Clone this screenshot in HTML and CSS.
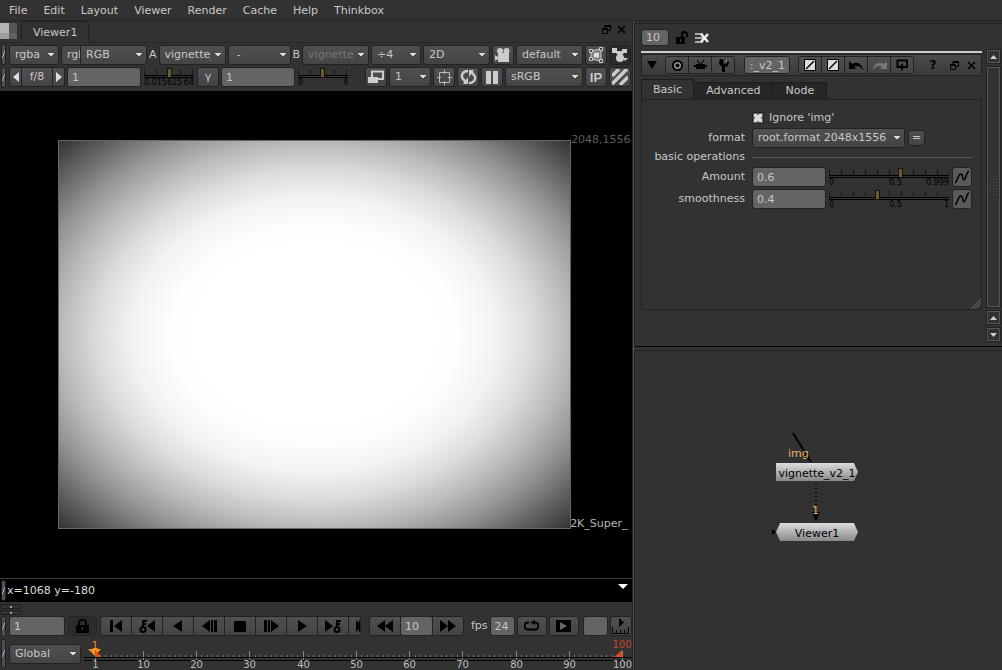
FILE: index.html
```html
<!DOCTYPE html>
<html lang="en">
<head>
  <meta charset="UTF-8">
  <title>Viewer1</title>
  <link rel="stylesheet" href="styles.css">
</head>
<body>
  <nav class="menubar">
    <button>File</button>
    <button>Edit</button>
    <button>Layout</button>
    <button>Viewer</button>
    <button>Render</button>
    <button>Cache</button>
    <button>Help</button>
    <button>Thinkbox</button>
  </nav>

  <main class="workspace">
    <section class="left-pane">
      <div class="tabbar">
        <button class="pane-menu" aria-label="Pane menu"></button>
        <button class="pane-tab">Viewer1</button>
        <button class="plain" aria-label="Float pane"><svg width="9" height="9" viewBox="0 0 9 9"><path d="M3 3V.5h5.500V5.500H6M3 1.500h5.500M.5 3.500h5v5h-5zM.5 4.500h5" fill="none" stroke="#000"/></svg></button>
        <button class="plain" aria-label="Close pane"><svg width="9" height="9" viewBox="0 0 9 9"><path d="M1 1l7 7M8 1L1 8" stroke="#000" stroke-width="1.500"/></svg></button>
      </div>

      <div class="toolbar">
        <span class="handle"></span>
        <select class="w50" aria-label="Channels"><option>rgba</option></select>
        <div class="joined">
          <select class="w-cut" aria-label="Alpha channel"><option>rgba.alpha</option></select>
          <select class="w67" aria-label="Display channels"><option>RGB</option></select>
        </div>
        <label for="inputA">A</label>
        <select id="inputA" class="w67"><option>vignette_v2_1</option></select>
        <select class="w63 indent" aria-label="Wipe mode"><option>-</option></select>
        <label for="inputB">B</label>
        <select id="inputB" class="w67" disabled><option>vignette_v2_1</option></select>
        <select class="w50" aria-label="Zoom"><option>÷4</option></select>
        <select class="w67" aria-label="View mode"><option>2D</option></select>
        <button class="btn" aria-label="Camera"><svg width="16" height="16" viewBox="0 0 16 16"><g fill="#ccc"><circle cx="5" cy="4" r="3"/><circle cx="11.500" cy="4" r="3"/><path d="M3 6h11v9H3zM0 8l3 2v2l-3 2z"/></g></svg></button>
        <select class="w67" aria-label="Camera view"><option>default</option></select>
        <button class="btn" aria-label="Selection mode"><svg width="16" height="16" viewBox="0 0 16 16"><path d="M3 4l10-2v12L3 12z" fill="#777" stroke="#ccc"/><path d="M6 6l2 1 3-2v6l-3-1-2 1z" fill="#ddd"/><circle cx="8" cy="8" r="2.500" fill="#ddd"/><g fill="#444" stroke="#ccc"><path d="M1.500 2.500h3v3h-3zM11.500 .5h3v3h-3zM1.500 10.500h3v3h-3zM11.500 12.500h3v3h-3z"/></g></svg></button>
        <button class="btn dark" aria-label="Node gizmo"><svg width="18" height="16" viewBox="0 0 18 16"><g fill="#ccc"><path d="M1 1h5v3h5V2h5v4h-3l-3 3H8L5 6H1zM12 11h5l-3 3z"/><circle cx="9" cy="11" r="4"/></g></svg></button>
      </div>

      <div class="toolbar">
        <span class="handle"></span>
        <div class="joined">
          <button class="btn arrow" aria-label="Stop down"><svg width="6" height="10" viewBox="0 0 6 10"><path d="M6 0v10L0 5z" fill="#ddd"/></svg></button>
          <button class="btn fstop">f/8</button>
          <button class="btn arrow" aria-label="Stop up"><svg width="6" height="10" viewBox="0 0 6 10"><path d="M0 0v10l6-5z" fill="#ddd"/></svg></button>
        </div>
        <input type="text" class="w74" value="1" aria-label="Gain">
        <div class="slider narrow">
          <input type="range" min="0" max="100" value="50" aria-label="Gain slider">
          <div class="marks"><span>0.015625</span><span>64</span></div>
        </div>
        <button class="btn">γ</button>
        <input type="text" class="w74" value="1" aria-label="Gamma">
        <div class="slider narrow">
          <input type="range" min="0" max="100" value="49" aria-label="Gamma slider">
          <div class="marks"><span>0</span><span>4</span></div>
        </div>
        <span class="spacer"></span>
        <button class="btn" aria-label="Proxy mode"><svg width="16" height="14" viewBox="0 0 16 14"><path d="M4 7V1.500h11V9H10" fill="none" stroke="#ccc" stroke-width="2"/><path d="M0 7h10v6H0z" fill="#ccc"/></svg></button>
        <select class="w42" aria-label="Downrez"><option>1</option></select>
        <button class="btn" aria-label="Region of interest"><svg width="15" height="15" viewBox="0 0 15 15"><path d="M2.500 2.500h10v10h-10zM7.500 0v4M7.500 11v4M0 7.500h4M11 7.500h4" fill="none" stroke="#bbb"/></svg></button>
        <button class="btn" aria-label="Refresh"><svg width="17" height="16" viewBox="0 0 17 16"><path d="M8 2C2 2 0 8 4 11l2 2M9 14c6 0 8-6 4-9l-2-2" fill="none" stroke="#ccc" stroke-width="2.500"/><path d="M8 8v7H3zM9 8V1h5z" fill="#ccc"/></svg></button>
        <button class="btn" aria-label="Pause"><svg width="12" height="13" viewBox="0 0 12 13"><path d="M0 0h5v13H0zM7 0h5v13H7z" fill="#ccc"/></svg></button>
        <select class="w78" aria-label="Viewer process"><option>sRGB</option></select>
        <button class="btn ip">IP</button>
        <button class="btn" aria-label="Clipping warning"><svg width="16" height="16" viewBox="0 0 16 16"><path d="M0 7l7-7M0 15L15 0M8 16l8-8" stroke="#ccc" stroke-width="3.500"/></svg></button>
      </div>

      <div class="viewer">
        <div class="frame">
          <span class="res">2048,1556</span>
          <span class="format-name">2K_Super_</span>
        </div>
      </div>

      <div class="status">
        <span class="handle"></span>
        <span>x=1068 y=-180</span>
        <button class="plain" aria-label="Info menu"><svg width="10" height="5" viewBox="0 0 10 5"><path d="M0 0h10L5 5z" fill="#fff"/></svg></button>
      </div>

      <div class="splitter"><span></span><span></span></div>

      <div class="toolbar playback">
        <span class="handle"></span>
        <input type="text" class="w56" value="1" aria-label="Frame">
        <button class="btn lock" aria-label="Lock range"><svg width="13" height="14" viewBox="0 0 13 14"><path d="M3 6V4a3.500 3.500 0 0 1 7 0v2" fill="none" stroke="#000" stroke-width="2"/><path d="M0 6h13v8H0z"/><path d="M6.500 8v3" stroke="#444"/></svg></button>
        <div class="joined transport">
          <button class="btn" aria-label="First frame"><svg width="14" height="14" viewBox="0 0 14 14"><path d="M1 1h3v12H1zM13 1v12L5 7z"/></svg></button>
          <button class="btn" aria-label="Previous keyframe"><svg width="18" height="14" viewBox="0 0 18 14"><path d="M17 1v12L9 7z"/><path d="M5 8V1M5 2h4M5 5h3" stroke="#000" stroke-width="2"/><circle cx="5" cy="10.500" r="2.500" fill="none" stroke="#000" stroke-width="2"/></svg></button>
          <button class="btn" aria-label="Play backward"><svg width="10" height="14" viewBox="0 0 10 14"><path d="M9 1v12L0 7z"/></svg></button>
          <button class="btn" aria-label="Previous frame"><svg width="15" height="14" viewBox="0 0 15 14"><path d="M8 1v12L0 7zM9 1h2v12H9zM12 1h3v12h-3z"/></svg></button>
          <button class="btn" aria-label="Stop"><svg width="12" height="11" viewBox="0 0 12 11"><rect width="12" height="11" rx="1"/></svg></button>
          <button class="btn" aria-label="Next frame"><svg width="15" height="14" viewBox="0 0 15 14"><path d="M0 1h3v12H0zM4 1h2v12H4zM7 1v12l8-6z"/></svg></button>
          <button class="btn" aria-label="Play forward"><svg width="10" height="14" viewBox="0 0 10 14"><path d="M1 1v12l9-6z"/></svg></button>
          <button class="btn" aria-label="Next keyframe"><svg width="18" height="14" viewBox="0 0 18 14"><path d="M1 1v12l8-6z"/><path d="M13 8V1M13 2h4M13 5h3" stroke="#000" stroke-width="2"/><circle cx="13" cy="10.500" r="2.500" fill="none" stroke="#000" stroke-width="2"/></svg></button>
          <button class="btn last" aria-label="Last frame"><svg width="4" height="14" viewBox="0 0 4 14"><path d="M0 1v12l3-3V13h1V1H3v3z"/></svg></button>
        </div>
        <div class="joined skip">
          <button class="btn" aria-label="Skip back"><svg width="18" height="14" viewBox="0 0 18 14"><path d="M9 1v12L1 7zM17 1v12L9 7z"/></svg></button>
          <input type="text" value="10" aria-label="Skip increment">
          <button class="btn" aria-label="Skip forward"><svg width="18" height="14" viewBox="0 0 18 14"><path d="M1 1v12l8-6zM9 1v12l8-6z"/></svg></button>
        </div>
        <label for="fps">fps</label>
        <input type="text" id="fps" class="w25" value="24">
        <button class="btn wide" aria-label="Loop"><svg width="15" height="12" viewBox="0 0 15 12"><path d="M5 2.500H4a3.500 3.500 0 0 0 0 7h7a3.500 3.500 0 0 0 0-7" fill="none" stroke="#000" stroke-width="2"/><path d="M11 0v5L6 2.500z"/></svg></button>
        <button class="btn wide" aria-label="Flipbook"><svg width="15" height="12" viewBox="0 0 15 12"><path d="M0 0h15v12H0z"/><path d="M4 2v8l7-4z" fill="#666"/></svg></button>
        <button class="btn blank" aria-label="Range"></button>
        <button class="btn" aria-label="Range marker"><svg width="17" height="16" viewBox="0 0 17 16"><path d="M7 0v9l5-4.500z"/><path d="M.5 9v6.500h16V9M4.500 12v3M8.500 12v3M12.500 12v3" fill="none" stroke="#000"/></svg></button>
      </div>

      <div class="timeline">
        <span class="handle"></span>
        <select class="w72" aria-label="Range mode"><option>Global</option></select>
        <svg class="ruler">
          <g transform="translate(-84 -640)">
            <path id="minorTicks" stroke="#777"/>
            <path id="majorTicks" stroke="#888"/>
            <path d="M84 657.500h560M84 660.500h560" stroke="#000"/>
            <g id="frameLabels" class="frame-labels"></g>
            <path d="M88 649h13l-6 7z" fill="#f7931e"/>
            <path d="M95 650v7h7z" fill="#d84a20"/>
            <path d="M622 650v7h-8z" fill="#d84a20"/>
            <text class="cur" x="95" y="649">1</text>
            <text class="end" x="622" y="648">100</text>
          </g>
        </svg>
      </div>
    </section>

    <section class="right-pane">
      <div class="properties">
        <div class="bin-bar">
          <input type="text" value="10" class="w28" aria-label="Maximum panels">
          <button class="plain" aria-label="Lock panels"><svg width="14" height="14" viewBox="0 0 14 14"><path d="M7 6V3.500a2.500 2.500 0 0 1 5 0V6" fill="none" stroke="#000" stroke-width="2"/><path d="M1 6h9v7H1z"/><path d="M5.500 8v3" stroke="#444"/></svg></button>
          <button class="plain" aria-label="Clear panels"><svg width="14" height="12" viewBox="0 0 14 12"><path d="M0 2h8M0 6h8M0 10h8" stroke="#aaa" stroke-width="2"/><path d="M6 2l7 8M13 2l-7 8" stroke="#eee" stroke-width="2.500"/></svg></button>
        </div>

        <div class="bin">
          <div class="panel">
            <div class="panel-head">
              <button class="plain" aria-label="Collapse"><svg width="10" height="8" viewBox="0 0 10 8"><path d="M0 0h10L5 8z"/></svg></button>
              <div class="joined head-group">
                <button class="btn" aria-label="Center node"><svg width="11" height="11" viewBox="0 0 11 11"><circle cx="5.500" cy="5.500" r="4.500" fill="#999" stroke="#000" stroke-width="2"/><circle cx="5.500" cy="5.500" r="2"/></svg></button>
                <button class="btn" aria-label="Node inputs"><svg width="13" height="12" viewBox="0 0 13 12"><path d="M2 5h9v5H2zM3 0l3 5H5zM10 0L7 5h1zM0 6h13v2H0z"/><path d="M3 1l3 4M10 1L7 5" stroke="#000"/></svg></button>
                <button class="btn" aria-label="Edit gizmo"><svg width="11" height="13" viewBox="0 0 11 13"><path d="M2 0L1 5l3 3v5h3V8l3-1 1-4-2-2v3L7 5 5 4l1-3z"/><path d="M9 1l-1 2" stroke="#bbb"/></svg></button>
              </div>
              <input type="text" class="node-name" value=":_v2_1" aria-label="Node name">
              <div class="joined head-group">
                <button class="btn" aria-label="Tile colour"><svg width="12" height="12" viewBox="0 0 12 12"><path d="M.5.5h11v11H.5z" fill="#ddd" stroke="#000"/><path d="M2 10l8-8" stroke="#000" stroke-width="1.500"/></svg></button>
                <button class="btn" aria-label="Interface colour"><svg width="12" height="12" viewBox="0 0 12 12"><path d="M.5.5h11v11H.5z" fill="#ddd" stroke="#000"/><path d="M2 10l8-8" stroke="#000" stroke-width="1.500"/></svg></button>
                <button class="btn" aria-label="Undo"><svg width="15" height="11" viewBox="0 0 15 11"><path d="M0 1v8h7L5 7c3-2 6-1 9 3-1-6-6-9-11-6z"/></svg></button>
                <button class="btn" aria-label="Redo"><svg width="15" height="11" viewBox="0 0 15 11"><path d="M15 1v8H8l2-2C7 5 4 6 1 10 2 4 7 1 12 4z" fill="#777"/></svg></button>
                <button class="btn" aria-label="Revert"><svg width="12" height="12" viewBox="0 0 12 12"><path d="M4 8H1.500V1.500H11V8H7" fill="none" stroke="#000" stroke-width="2"/><path d="M7 4v8L3 8z"/></svg></button>
              </div>
              <span class="spacer"></span>
              <button class="plain help">?</button>
              <button class="plain" aria-label="Float panel"><svg width="9" height="9" viewBox="0 0 9 9"><path d="M3 3V.5h5.500V5.500H6M3 1.500h5.500M.5 3.500h5v5h-5zM.5 4.500h5" fill="none" stroke="#000"/></svg></button>
              <button class="plain" aria-label="Close panel"><svg width="9" height="9" viewBox="0 0 9 9"><path d="M1 1l7 7M8 1L1 8" stroke="#000" stroke-width="1.500"/></svg></button>
            </div>

            <div class="knob-tabs">
              <button class="active">Basic</button>
              <button>Advanced</button>
              <button>Node</button>
            </div>

            <div class="knobs">
              <div class="knob">
                <span></span>
                <div class="field"><input type="checkbox" id="ignore" checked><label for="ignore">Ignore 'img'</label></div>
              </div>
              <div class="knob">
                <label for="format">format</label>
                <div class="field"><select id="format" class="w152"><option>root.format 2048x1556</option></select><button class="btn equals">=</button></div>
              </div>
              <div class="knob divider">
                <span>basic operations</span>
                <hr>
              </div>
              <div class="knob tall">
                <label for="amount">Amount</label>
                <div class="field">
                  <input type="text" id="amount" class="w74" value="0.6">
                  <div class="slider">
                    <input type="range" min="0" max="1" step="0.001" value="0.6" aria-label="Amount slider">
                    <div class="marks halves"><span>0</span><span>0.5</span><span>0.999</span></div>
                  </div>
                  <button class="btn curve" aria-label="Animate amount"><svg width="16" height="16" viewBox="0 0 16 16"><path d="M1 14C4 12 4 4 7 5s1 6 3 6 2-8 5-9" fill="none" stroke="#000" stroke-width="1.500"/></svg></button>
                </div>
              </div>
              <div class="knob tall">
                <label for="smooth">smoothness</label>
                <div class="field">
                  <input type="text" id="smooth" class="w74" value="0.4">
                  <div class="slider">
                    <input type="range" min="0" max="1" step="0.001" value="0.4" aria-label="Smoothness slider">
                    <div class="marks halves"><span>0</span><span>0.5</span><span>1</span></div>
                  </div>
                  <button class="btn curve" aria-label="Animate smoothness"><svg width="16" height="16" viewBox="0 0 16 16"><path d="M1 14C4 12 4 4 7 5s1 6 3 6 2-8 5-9" fill="none" stroke="#000" stroke-width="1.500"/></svg></button>
                </div>
              </div>
              <span class="grip"></span>
            </div>
          </div>

          <div class="scrollbar">
            <button aria-label="Scroll up"><svg width="7" height="4" viewBox="0 0 7 4"><path d="M0 4h7L3.500 0z" fill="#ccc"/></svg></button>
            <div class="thumb"><span></span></div>
            <button aria-label="Scroll up"><svg width="7" height="4" viewBox="0 0 7 4"><path d="M0 4h7L3.500 0z" fill="#ccc"/></svg></button>
            <button aria-label="Scroll down"><svg width="7" height="4" viewBox="0 0 7 4"><path d="M0 0h7L3.500 4z" fill="#ccc"/></svg></button>
          </div>
        </div>
      </div>

      <div class="node-graph">
        <svg class="wires" width="100" height="120" viewBox="766 426 100 120">
          <path d="M793 433l15 24" stroke="#000" stroke-width="2"/>
          <path d="M803 456l5-2 4 9z"/>
          <path d="M816 484v24" stroke="#000" stroke-width="2" stroke-dasharray="1 3"/>
          <path d="M812 512h8l-4 10z"/>
          <path d="M772 529v6l4-3z"/>
          <text class="wire-label" x="788" y="457">img</text>
          <text class="wire-label" x="812" y="514">1</text>
        </svg>
        <div class="node group-node"><span>vignette_v2_1</span></div>
        <div class="node viewer-node"><span>Viewer1</span></div>
      </div>
    </section>
  </main>

  <script>
    // frames 1-100 along the ruler
    const frameX = f => Math.round(94.7 + (f - 1) * 5.33) + 0.5;
    const labels = document.getElementById('frameLabels');
    let minor = '', major = '';

    for (let f = 1; f <= 100; f++) {
      if (f === 1 || f % 10 === 0) {
        major += `M${frameX(f)} 651v10`;
        const t = document.createElementNS('http://www.w3.org/2000/svg', 'text');
        t.setAttribute('x', frameX(f));
        t.setAttribute('y', 668);
        t.textContent = f;
        labels.appendChild(t);
      } else {
        minor += `M${frameX(f)} 655v3`;
      }
    }
    document.getElementById('minorTicks').setAttribute('d', minor);
    document.getElementById('majorTicks').setAttribute('d', major);
  </script>
</body>
</html>
```

FILE: styles.css
```css
* { box-sizing: border-box; }
body {
  margin: 0; height: 100vh; overflow: hidden;
  display: flex; flex-direction: column;
  background: #323232; color: #c8c8c8;
  font: 11px/14px Verdana, "DejaVu Sans", sans-serif;
}
button, input, select { font: inherit; color: inherit; margin: 0; }
svg { display: block; }
button { display: flex; align-items: center; justify-content: center; padding: 0; }

.menubar { display: flex; height: 20px; padding: 1px 0 0 1px; }
.menubar button { background: none; border: none; padding: 0 8px; }

.workspace { flex: 1; min-height: 0; display: grid; grid-template-columns: 633fr 369fr; }
.left-pane {
  display: flex; flex-direction: column; min-width: 0; overflow: hidden;
  border-top: 1px solid #262626; border-right: 1px solid #222;
}

/* pane tabs */
.tabbar {
  display: flex; align-items: flex-start; gap: 6px;
  height: 22px; padding-right: 6px; border-bottom: 1px solid #262626;
}
.pane-menu {
  width: 17px; height: 16px; margin-top: 2px; border: none;
  background: linear-gradient(transparent 10px, #7775 10px), linear-gradient(90deg, #b4b4b4 9px, #555 9px);
}
.pane-tab {
  height: 22px; padding: 0 11px; margin: 0 auto 0 -2px;
  background: #323232; border: 1px solid #222; border-bottom: none;
  border-radius: 3px 3px 0 0;
}
.plain { background: none; border: none; }
.tabbar .plain { margin-top: 4px; }

/* toolbars */
.toolbar { display: flex; align-items: center; gap: 2px; height: 22px; padding: 0 1px; }
.tabbar + .toolbar { height: 23px; }
.handle {
  flex: none; width: 5px; height: 21px; margin-right: 1px;
  background:
    linear-gradient(110deg, transparent 40%, #aaa 40% 60%, transparent 60%) center / 3px 7px no-repeat,
    #505050;
  border: 1px solid #1e1e1e; border-radius: 2px;
}
.spacer { flex: 1; }
select, .btn {
  flex: none; height: 20px;
  border: 1px solid #222; border-radius: 3px;
  background: linear-gradient(#505050, #444);
}
select {
  appearance: none; padding: 0 14px 0 5px; overflow: hidden;
  background:
    linear-gradient(to top right, transparent 50%, #ddd 50%) right 7px center / 3px 4px no-repeat,
    linear-gradient(to top left, transparent 50%, #ddd 50%) right 4px center / 3px 4px no-repeat,
    linear-gradient(#505050, #444);
}
select:disabled { color: #777; opacity: 1; }
.indent { padding-left: 8px; }
.btn { width: 22px; }
.btn.dark { background: #2a2a2a; }
.joined { display: flex; flex: none; }
.joined > * { border-radius: 0; margin-left: -1px; }
.joined > :first-child { margin-left: 0; border-radius: 3px 0 0 3px; }
.joined > :last-child { border-radius: 0 3px 3px 0; }
.arrow { width: 13px; }
.fstop { width: 32px; }
.ip { font: bold 13px "Liberation Sans", Arial, sans-serif; }

input[type="text"] {
  flex: none; height: 20px; padding: 0 4px;
  background: #646464; border: 1px solid #222; border-radius: 3px;
}
.w-cut { width: 20px; padding-right: 0; background: #4a4a4a; }
.w25 { width: 25px; }
.w28 { width: 28px; }
.w42 { width: 42px; }
.w50 { width: 50px; }
.w56 { width: 56px; }
.w63 { width: 63px; }
.w67 { width: 67px; }
.w72 { width: 72px; }
.w74 { width: 74px; }
.w78 { width: 78px; }
.w152 { width: 153px; }

/* sliders */
.slider { flex: 1; height: 20px; min-width: 0; }
.slider.narrow { flex: none; width: 50px; margin: 0 1px; }
.slider input {
  display: block; appearance: none; width: 100%; height: 11px; margin: 0;
  background:
    linear-gradient(#000, #000) 0 8px / 100% 1px no-repeat,
    linear-gradient(#000, #000) 0 10px / 100% 1px no-repeat,
    repeating-linear-gradient(90deg, #1a1a1a 0 1px, transparent 1px 12px) 0 2px / 100% 6px no-repeat;
}
.slider input::-webkit-slider-thumb {
  appearance: none; width: 5px; height: 10px;
  background: #6b5a2e; border: 1px solid #111;
}
.marks {
  display: flex; justify-content: space-between;
  font-size: 8px; line-height: 9px; color: #000;
}
.halves { display: grid; grid-template-columns: 50% 1fr auto; text-align: left; }

/* image area */
.viewer {
  flex: 1; min-height: 0; margin-top: 3px; padding-right: 3px; overflow: hidden;
  display: flex; align-items: center; justify-content: center; background: #000;
}
.frame {
  position: relative; width: 81.6%; aspect-ratio: 513 / 389;
  border: 1px solid #666;
  background: radial-gradient(ellipse farthest-corner, #fff 32%, #fdfdfd 40%, #f3f3f3 50%,
    #dcdcdc 60%, #bababa 70%, #929292 80%, #626262 90%, #323232 100%);
}
.res, .format-name { position: absolute; left: 100%; white-space: nowrap; }
.res { top: -8px; margin-left: 1px; color: #5c5c5c; }
.format-name { bottom: -3px; color: #b4b4b4; }

.status {
  display: flex; align-items: center; height: 24px; padding-left: 1px;
  background: #000; border-top: 1px solid #3c3c3c; color: #ddd;
}
.status .plain { margin: 0 4px 8px auto; }
.splitter { height: 13px; padding-top: 2px; }
.splitter span {
  display: block; width: 22px; height: 5px; margin-bottom: 1px;
  background: radial-gradient(circle at 10px 2px, #999 1px, #323232 1px);
  border: 1px solid #1e1e1e; border-radius: 2px;
}

/* playback */
.btn.lock { width: 29px; margin: 0 1px; background: #2c2c2c; border-color: #262626; }
.transport .btn { width: 32px; }
.transport .last { width: 13px; justify-content: flex-end; }
.skip { margin: 0 5px 0 6px; }
.skip .btn { width: 32px; }
.skip input { width: 33px; }
.btn.wide { width: 30px; }
.btn.blank { width: 25px; margin-left: 2px; background: #646464; }
.timeline { display: flex; align-items: center; gap: 3px; height: 33px; padding-left: 1px; }
.timeline .handle { height: 29px; margin: 0; }
.ruler { flex: 1; align-self: flex-end; min-width: 0; height: 30px; font-size: 10px; }
.frame-labels { fill: #bbb; text-anchor: middle; }
.cur { fill: #f7931e; text-anchor: middle; }
.end { fill: #c0452a; text-anchor: middle; }

/* properties bin */
.right-pane {
  display: flex; flex-direction: column; min-width: 0;
  border-left: 1px solid #555; border-top: 1px solid #262626;
}
.properties {
  margin-top: 2px; padding: 4px 1px 4px 6px;
  border-top: 1px solid #222; border-left: 1px solid #222; border-bottom: 1px solid #000;
}
.bin-bar { display: flex; align-items: center; gap: 6px; height: 19px; }
.bin-bar input { height: 17px; }
.bin { display: flex; gap: 4px; margin-top: 2px; }
.panel { flex: 1; min-width: 0; border-top: 2px solid #ccc; margin: 2px 0 32px; }
.panel-head {
  display: flex; align-items: center; height: 22px; margin-top: 1px; padding: 0 5px;
  background: linear-gradient(#4a4a4a, #3a3a3a); border: 1px solid #222;
}
.panel-head .btn, .panel-head input { height: 18px; }
.head-group .btn { width: 24px; }
.head-group { margin: 0 9px 0 8px; }
.node-name { width: 46px; text-align: right; }
.help { width: 18px; font-weight: bold; font-size: 12px; color: #000; }
.help ~ .plain { margin-left: 8px; }
.knob-tabs { display: flex; align-items: flex-end; height: 20px; margin-top: 3px; }
.knob-tabs button {
  height: 17px; padding: 0 12px; background: #262626;
  border: 1px solid #1c1c1c; border-left: none; border-bottom: none;
}
.knob-tabs .active { height: 20px; padding: 0 11px; background: #323232; border-left: 1px solid #1c1c1c; border-radius: 3px 3px 0 0; }
.knobs {
  position: relative; height: 211px; padding: 8px 9px 0 8px;
  border: 1px solid #222;
}
.knob { display: grid; grid-template-columns: 95px 1fr; gap: 7px; align-items: center; height: 20px; text-align: right; }
.knob > :first-child { white-space: nowrap; }
.knob.divider { height: 18px; }
.knob.tall { height: 22px; }
.knob hr { width: 100%; margin: 0; border: none; border-top: 1px solid #5a5a5a; }
.field { display: flex; align-items: center; gap: 3px; }
.field input[type="checkbox"] {
  appearance: none; width: 12px; height: 12px; margin: 0 2px 0 0;
  border: 1px solid #222; background: #646464;
}
.field input[type="checkbox"]:checked {
  background:
    linear-gradient(45deg, transparent 35%, #ddd 35% 65%, transparent 65%) center / 8px 8px no-repeat,
    linear-gradient(-45deg, transparent 35%, #ddd 35% 65%, transparent 65%) center / 8px 8px no-repeat,
    #646464;
}
.equals { width: 17px; height: 16px; }
.btn.curve { width: 20px; background: #5a5a5a; }
.grip {
  position: absolute; right: 0; bottom: 0; width: 10px; height: 10px;
  background: linear-gradient(135deg, #323232 50%, transparent 50%),
    repeating-linear-gradient(135deg, #222 0 1px, #555 1px 2px);
}
.scrollbar { display: flex; flex-direction: column; gap: 2px; width: 15px; }
.scrollbar button, .thumb { background: #323232; border: 1px solid #222; outline: 1px solid #555; outline-offset: -2px; }
.scrollbar button { height: 15px; }
.thumb { flex: 1; display: flex; align-items: center; justify-content: center; }
.thumb span {
  width: 9px; height: 18px;
  background: radial-gradient(circle, #555 1px, transparent 1px) 0 0 / 3px 3px;
}

/* node graph */
.node-graph {
  flex: 1; position: relative; margin-top: 3px;
  border-top: 1px solid #222; border-left: 1px solid #222;
}
.wires { position: absolute; left: 131px; top: 75px; }
.wire-label { fill: #e8b060; }
.node {
  position: absolute; left: 141px; width: 82px; height: 18px;
  background: linear-gradient(#ddd, #888);
  color: #000; text-align: center; line-height: 22px; white-space: nowrap;
}
.group-node { top: 112px; clip-path: polygon(0 0, 95% 0, 100% 50%, 95% 100%, 0 100%); }
.viewer-node { top: 172px; clip-path: polygon(5% 0, 95% 0, 100% 50%, 95% 100%, 5% 100%, 0 50%); }
```
